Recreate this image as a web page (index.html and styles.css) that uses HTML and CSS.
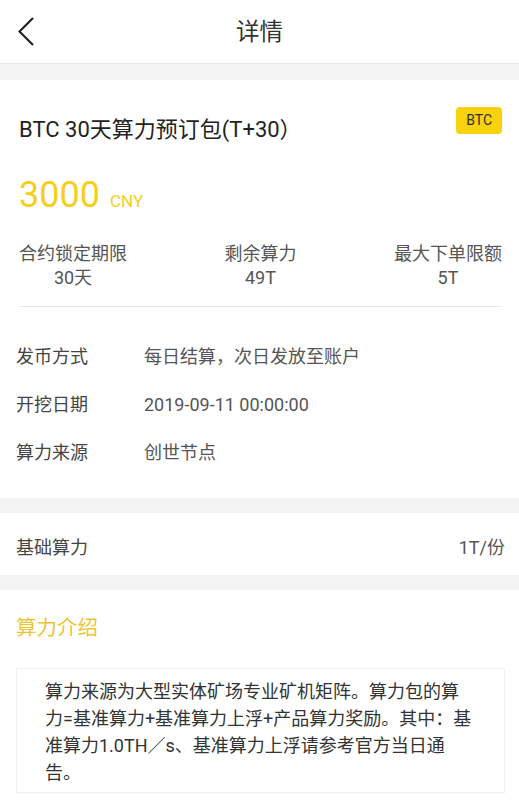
FILE: index.html
```html
<!DOCTYPE html>
<html>
  <head lang="zh">
    <meta charset="UTF-8" />
    <title>详情</title>
    <link rel="stylesheet" href="styles.css">
  </head>

  <body>
    <div class="header">
      <a class="back">
        <svg width="20" height="32" viewBox="0 0 20 32">
          <polyline points="15,2 1.5,15.5 15,29" fill="none" stroke="#222" stroke-width="2.2" />
        </svg>
      </a>
      <h1>详情</h1>
    </div>

    <div class="card">
      <div class="top">
        <div class="title-row">
          <div class="title">BTC 30天算力预订包(T+30）</div>
          <span class="badge">BTC</span>
        </div>
        <div class="price">3000<span class="unit">CNY</span></div>
        <ul class="stats">
          <li><p>合约锁定期限</p><p>30天</p></li>
          <li><p>剩余算力</p><p>49T</p></li>
          <li><p>最大下单限额</p><p>5T</p></li>
        </ul>
      </div>
      <ul class="info">
        <li><span class="label">发币方式</span><span class="value">每日结算，次日发放至账户</span></li>
        <li><span class="label">开挖日期</span><span class="value">2019-09-11 00:00:00</span></li>
        <li><span class="label">算力来源</span><span class="value">创世节点</span></li>
      </ul>
    </div>

    <div class="row">
      <span class="label">基础算力</span>
      <span class="value">1T/份</span>
    </div>

    <div class="intro">
      <h2>算力介绍</h2>
      <div class="intro-box">
        算力来源为大型实体矿场专业矿机矩阵。算力包的算力=基准算力+基准算力上浮+产品算力奖励。其中：基准算力1.0TH／s、基准算力上浮请参考官方当日通告。
      </div>
    </div>
  </body>
</html>
```

FILE: styles.css
```css
body,
div,
ul,
li,
p,
h1,
h2 {
  margin: 0;
  padding: 0;
}

ul {
  list-style-type: none;
}

body {
  background: #f4f4f4;
  font-family: Roboto, "Noto Sans CJK SC", sans-serif;
  color: #333;
  text-spacing-trim: space-all;
}

.header {
  position: relative;
  height: 63px;
  background: #fff;
  border-bottom: 1px solid #e6e6e6;
  display: flex;
  align-items: center;
  justify-content: center;
}

.header .back {
  position: absolute;
  left: 18px;
  top: 16px;
}

.header h1 {
  margin-bottom: 4px;
  font-size: 23.5px;
  font-weight: 400;
  color: #333;
}

.card {
  margin-top: 16px;
  background: #fff;
  padding: 27px 0 21px;
}

.card .top {
  padding: 0 17px 0 19px;
}

.title-row {
  display: flex;
  justify-content: space-between;
  align-items: flex-start;
}

.title {
  margin-top: 8px;
  font-size: 22px;
  line-height: 30px;
  color: #222;
}

.badge {
  height: 27px;
  line-height: 27px;
  padding: 0 10px;
  background: #f8d10f;
  border-radius: 4px;
  font-size: 14px;
  color: #333;
}

.price {
  margin-top: 26px;
  font-size: 36px;
  line-height: 48px;
  color: #f6ce1c;
}

.price .unit {
  margin-left: 10px;
  font-size: 17px;
}

.stats {
  margin-top: 17px;
  padding-bottom: 16px;
  border-bottom: 1px solid #e8e8e8;
  display: flex;
  justify-content: space-between;
}

.stats li {
  text-align: center;
  font-size: 18px;
  line-height: 24px;
  color: #555;
}

.info {
  margin-top: 26px;
  padding-left: 16px;
}

.info li {
  display: flex;
  font-size: 18px;
  line-height: 48px;
}

.info .label {
  width: 128px;
  color: #444;
}

.info .value {
  color: #555;
}

.row {
  margin-top: 15px;
  background: #fff;
  padding: 0 14px 0 16px;
  height: 62px;
  display: flex;
  align-items: center;
  justify-content: space-between;
  font-size: 18px;
  color: #555;
}

.row .label {
  color: #444;
  margin-top: 4px;
}

.row .value {
  margin-top: 4px;
}

.intro {
  margin-top: 15px;
  background: #fff;
  padding: 23px 14px 20px 16px;
}

.intro h2 {
  font-size: 20.5px;
  font-weight: 400;
  line-height: 30px;
  color: #efc434;
}

.intro-box {
  margin-top: 25px;
  padding: 9px 30px 6px 28px;
  border: 1px solid #f1f1f1;
  box-shadow: 0 1px 2px rgba(0, 0, 0, 0.03);
  font-size: 18px;
  line-height: 27px;
  color: #333;
}
```
